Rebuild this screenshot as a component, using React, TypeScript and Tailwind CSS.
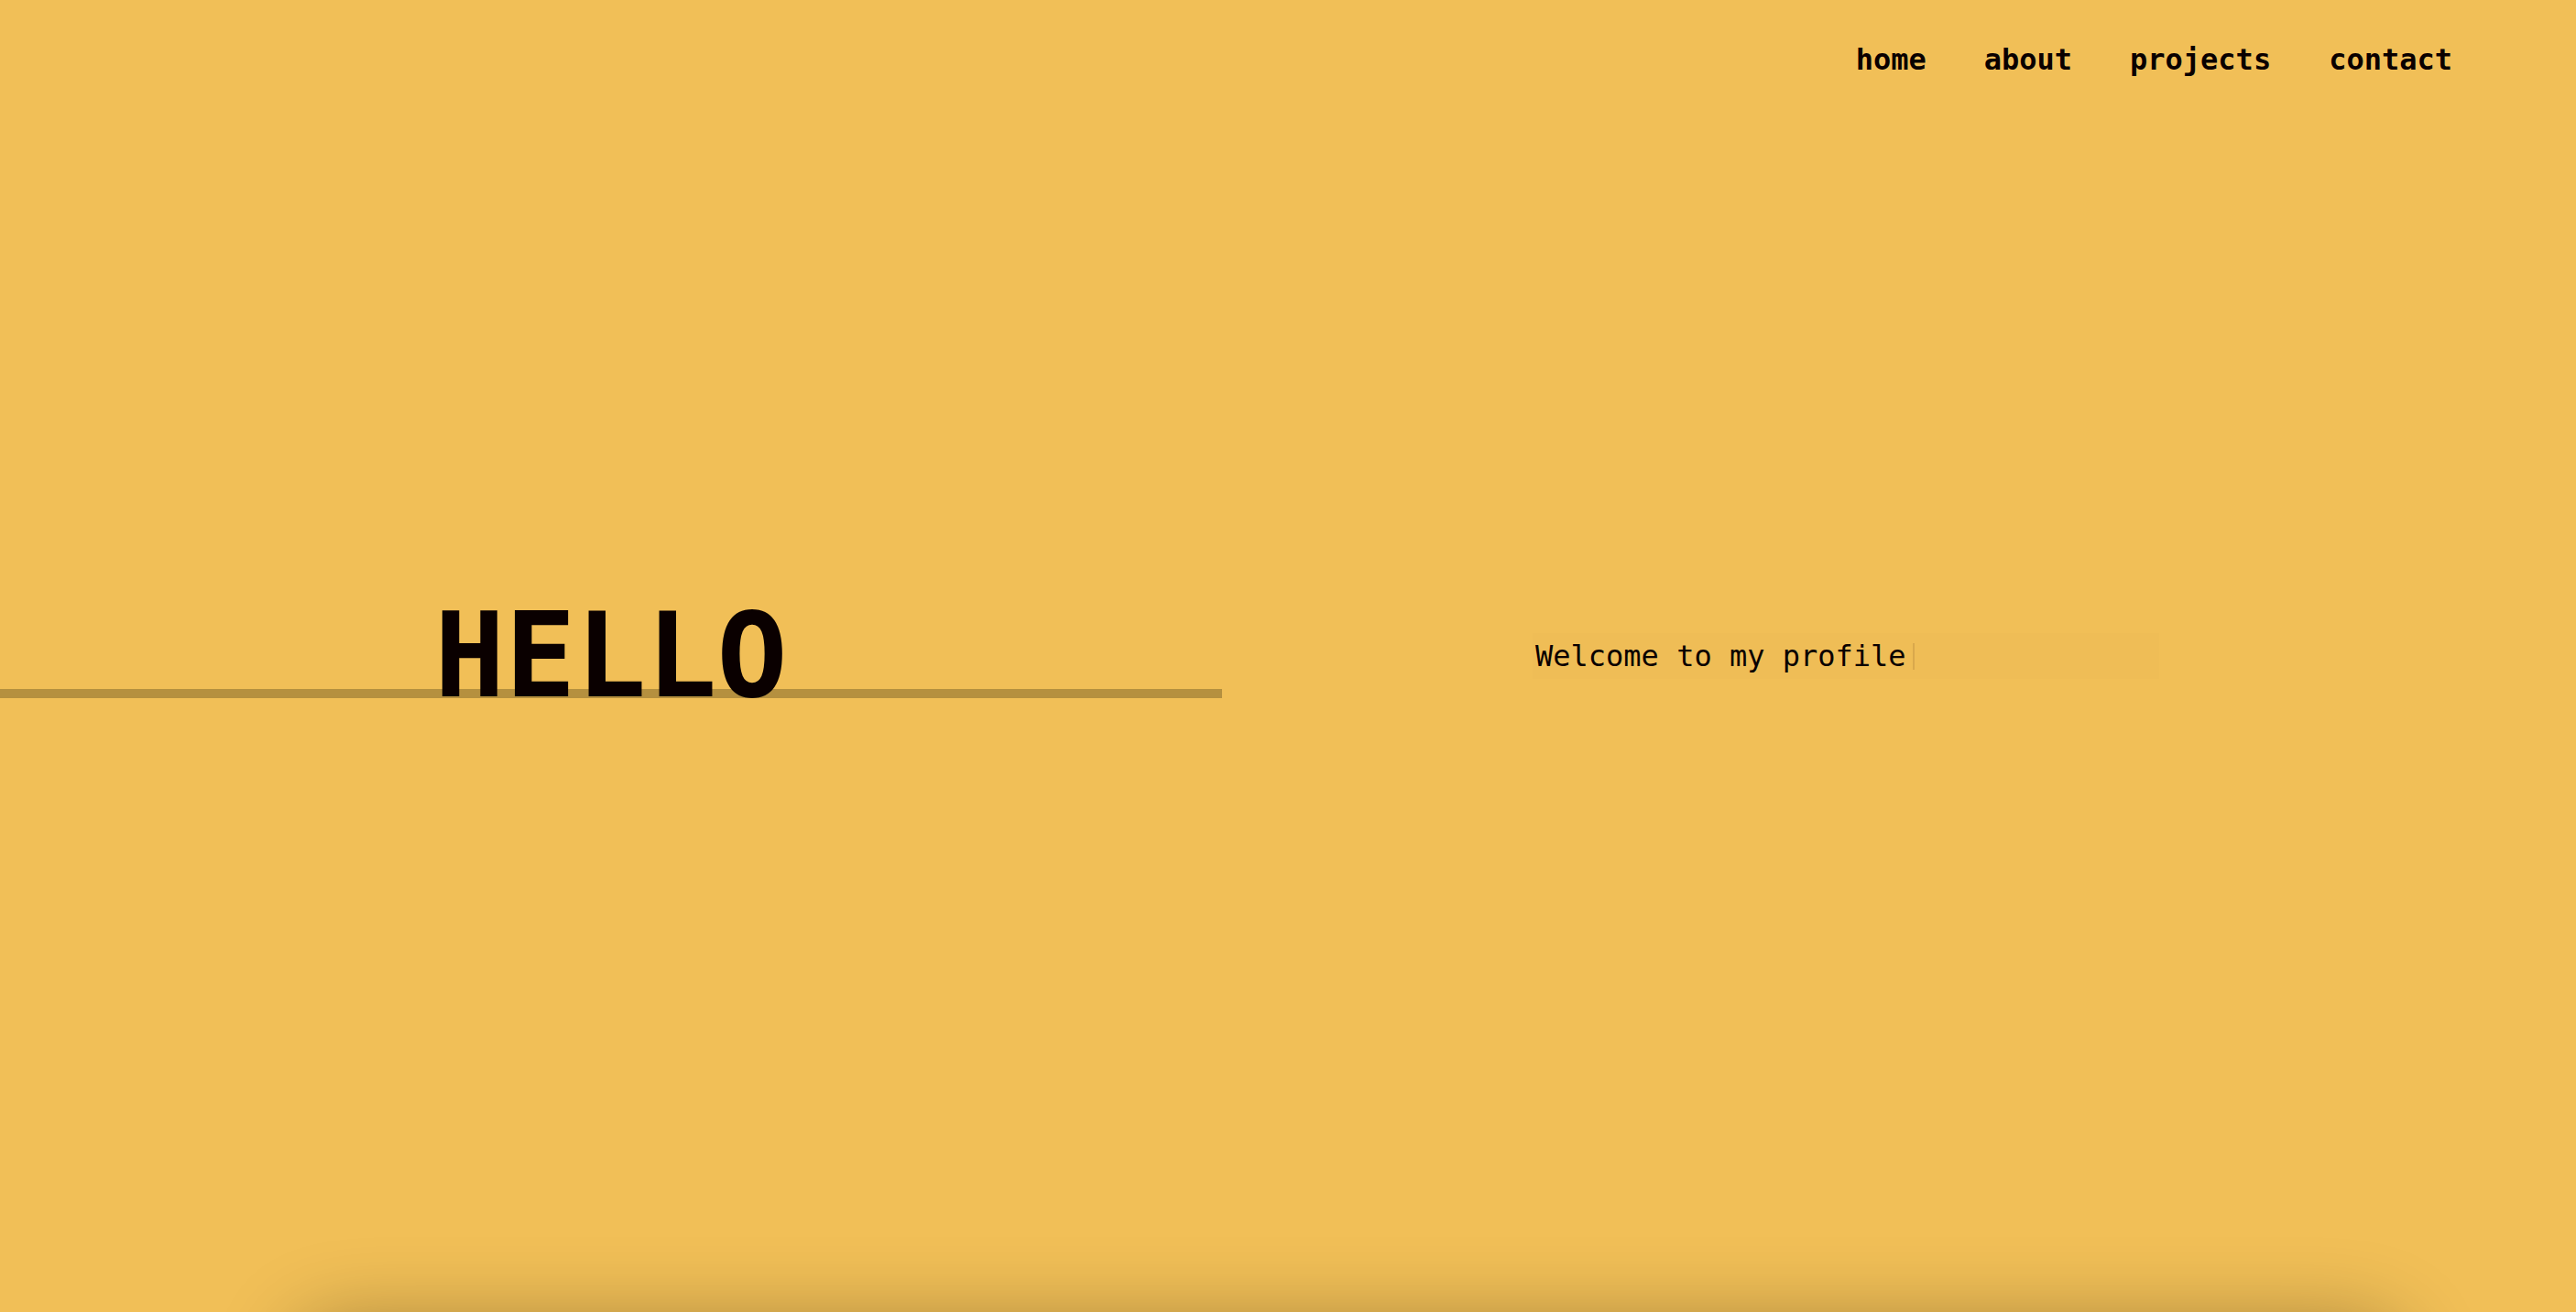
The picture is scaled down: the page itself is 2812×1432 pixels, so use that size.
import React from 'react';

const links = ['home', 'about', 'projects', 'contact'];

export default function App() {
  return (
    <div
      className="flex flex-col h-[1432px] w-[2812px] overflow-hidden bg-[#f1bf57] text-[#0a0000]"
      style={{ fontFamily: '"DejaVu Sans Mono", "Liberation Mono", monospace' }}
    >
      <header className="shrink-0 h-[120px] pt-[49px] pr-[135px]">
        <nav className="flex justify-end gap-[63px]">
          {links.map((l) => (
            <a key={l} href="#" className="text-[32px] leading-none font-bold">
              {l}
            </a>
          ))}
        </nav>
      </header>

      <main className="shrink-0 h-[1312px] pb-[120px] flex items-center">
        {/* left: big greeting over the rule */}
        <div className="w-[1334px] shrink-0 relative flex justify-center">
          <div className="absolute left-0 right-0 bottom-[18px] h-[10px] bg-[#b5903f]" />
          <h1 className="relative text-[128px] leading-none font-bold">HELLO</h1>
        </div>

        {/* right: typed intro */}
        <div className="flex-1 pl-[339px]">
          <div className="w-[684px] h-[50px] flex items-center pl-[3px] bg-black/[0.006]">
            <span className="text-[32px] leading-none">Welcome to my profile</span>
            <span className="ml-[7px] w-[2px] h-[29px] bg-[#d9a84c]" />
          </div>
        </div>
      </main>

      <section className="shrink-0 mt-[12px] ml-[322px] w-[2300px] h-[400px] rounded-[48px] bg-[#f1bf57] shadow-[0_0_90px_rgba(0,0,0,0.32)]" />
    </div>
  );
}
